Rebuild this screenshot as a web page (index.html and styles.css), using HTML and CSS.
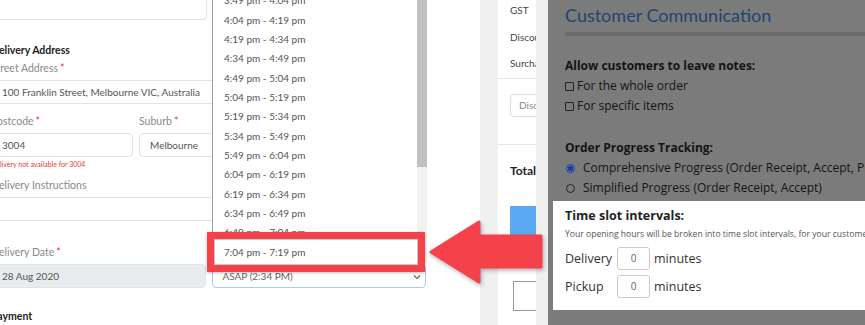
FILE: index.html
```html
<!DOCTYPE html>
<html lang="en">
<head>
  <meta charset="UTF-8">
  <meta name="viewport" content="width=device-width, initial-scale=1.0">
  <title>Time slot intervals</title>
  <link rel="stylesheet" href="styles.css">
</head>
<body>
  <div class="stage">

    <!-- Checkout form -->
    <section class="checkout">
      <div class="checkout-form">
        <div class="notes-box"></div>

        <h4 class="section-title">Delivery Address</h4>
        <label class="field-label">Street Address<span class="req">*</span></label>
        <div class="input">100 Franklin Street, Melbourne VIC, Australia</div>

        <div class="row-thirds">
          <div>
            <label class="field-label">Postcode<span class="req">*</span></label>
            <div class="input">3004</div>
          </div>
          <div>
            <label class="field-label">Suburb<span class="req">*</span></label>
            <div class="input">Melbourne</div>
          </div>
        </div>
        <div class="field-error">Delivery not available for 3004</div>

        <label class="field-label gap-top">Delivery Instructions</label>
        <div class="input"></div>

        <div class="row-halves">
          <div>
            <label class="field-label">Delivery Date<span class="req">*</span></label>
            <div class="input input-disabled">28 Aug 2020</div>
          </div>
          <div class="select-col">
            <div class="input select">
              ASAP (2:34 PM)
              <svg class="chevron" width="8" height="6" viewBox="0 0 8 6"><path d="M1 1.5l3 3 3-3" fill="none" stroke="#666" stroke-width="1.2"/></svg>
            </div>
          </div>
        </div>

        <h4 class="section-title payment">Payment</h4>
      </div>

      <!-- open time slot menu -->
      <ul class="slot-menu">
        <li>3:49 pm - 4:04 pm</li>
        <li>4:04 pm - 4:19 pm</li>
        <li>4:19 pm - 4:34 pm</li>
        <li>4:34 pm - 4:49 pm</li>
        <li>4:49 pm - 5:04 pm</li>
        <li>5:04 pm - 5:19 pm</li>
        <li>5:19 pm - 5:34 pm</li>
        <li>5:34 pm - 5:49 pm</li>
        <li>5:49 pm - 6:04 pm</li>
        <li>6:04 pm - 6:19 pm</li>
        <li>6:19 pm - 6:34 pm</li>
        <li>6:34 pm - 6:49 pm</li>
        <li>6:49 pm - 7:04 pm</li>
        <li>7:04 pm - 7:19 pm</li>
        <div class="menu-scroll"><div class="menu-thumb"></div></div>
      </ul>

      <div class="callout"></div>
    </section>

    <!-- Order summary (cropped) -->
    <aside class="summary">
      <div class="summary-card">
        <div class="sum-row first">GST</div>
        <div class="sum-row">Discount</div>
        <div class="sum-row">Surcharge</div>
        <div class="sum-sep"></div>
        <div class="sum-input">Discount code</div>
        <div class="sum-sep sep-low"></div>
        <div class="sum-total">Total</div>
        <div class="sum-button"></div>
        <div class="sum-outline"></div>
      </div>
    </aside>

    <!-- Settings panel -->
    <section class="settings">
      <h2 class="settings-title">Customer Communication</h2>
      <div class="settings-bar"></div>

      <div class="opt-title">Allow customers to leave notes:</div>
      <div class="check-row"><span class="checkbox"></span>For the whole order</div>
      <div class="check-row"><span class="checkbox"></span>For specific items</div>

      <div class="opt-title spaced">Order Progress Tracking:</div>
      <div class="check-row radio-row"><span class="radio checked"></span>Comprehensive Progress (Order Receipt, Accept, Preparing, Ready)</div>
      <div class="check-row radio-row"><span class="radio"></span>Simplified Progress (Order Receipt, Accept)</div>

      <div class="slot-box">
        <div class="slot-title">Time slot intervals:</div>
        <div class="slot-help">Your opening hours will be broken into time slot intervals, for your customers to choose from.</div>
        <div class="interval-row">
          <span class="interval-label">Delivery</span>
          <span class="interval-input">0</span>
          <span>minutes</span>
        </div>
        <div class="interval-row">
          <span class="interval-label">Pickup</span>
          <span class="interval-input">0</span>
          <span>minutes</span>
        </div>
      </div>
    </section>

    <!-- annotation arrow -->
    <svg class="arrow" width="865" height="325" viewBox="0 0 865 325">
      <polygon points="431,252 479,222 479,236 541,236 541,267 479,267 479,282" fill="#f5424a" stroke="#f5424a" stroke-width="3" stroke-linejoin="round"/>
    </svg>
  </div>
</body>
</html>
```

FILE: styles.css
```css
/* General */
body {
  margin: 0;
  padding: 0;
  font-family: 'Lato', 'Noto Sans', sans-serif;
  background: #fff;
  overflow: hidden;
}

.stage {
  display: flex;
  width: 865px;
  height: 325px;
  position: relative;
  overflow: hidden;
}

/* Checkout form */
.checkout {
  width: 480px;
  flex: none;
  position: relative;
  overflow: hidden;
  background: #fff;
}

.checkout-form {
  width: 435px;
  margin-left: -9px;
}

.notes-box {
  width: 216px;
  height: 50px;
  margin-top: -30px;
  border: 1px solid #dfe3e8;
  border-radius: 4px;
  box-sizing: border-box;
}

.section-title {
  font-size: 10.5px;
  font-weight: 700;
  line-height: 16px;
  color: #222;
  margin: 22px 0 0;
}

.section-title.payment {
  margin-top: 20px;
}

.field-label {
  display: block;
  font-size: 10.5px;
  line-height: 16px;
  color: #8a8a8a;
  margin-top: 2px;
}

.field-label.gap-top {
  margin-top: 7px;
}

.req {
  color: #e53935;
  margin-left: 2px;
}

.input {
  height: 24px;
  margin-top: 4px;
  padding: 0 10px;
  border: 1px solid #dfe3e8;
  border-radius: 4px;
  box-sizing: border-box;
  font-size: 10px;
  line-height: 22px;
  color: #555;
  white-space: nowrap;
  overflow: hidden;
}

.input-disabled {
  background: #e9ecef;
}

.row-thirds {
  display: grid;
  grid-template-columns: 142px 1fr;
  column-gap: 6px;
  margin-top: 7px;
}

.row-halves {
  display: grid;
  grid-template-columns: 1fr 1fr;
  column-gap: 6px;
  margin-top: 21px;
}

.select-col {
  padding-top: 18px;
}

.select {
  position: relative;
  border-color: #a9c9f2;
  color: #666;
}

.chevron {
  position: absolute;
  right: 4px;
  top: 9px;
}

.field-error {
  font-size: 7px;
  line-height: 12px;
  color: #e53935;
  margin-top: 1px;
}

/* Time slot menu */
.slot-menu {
  position: absolute;
  left: 212px;
  top: -8.7px;
  width: 215px;
  margin: 0;
  padding: 0;
  list-style: none;
  background: #fff;
  border-left: 1px solid #a0a0a0;
  box-sizing: border-box;
}

.slot-menu li {
  height: 19.35px;
  line-height: 19.35px;
  padding-left: 11px;
  font-size: 10px;
  color: #555;
}

.menu-scroll {
  position: absolute;
  right: 0;
  top: 0;
  bottom: 0;
  width: 10px;
  background: #f1f1f1;
}

.menu-thumb {
  height: 176px;
  background: #c1c1c1;
}

.callout {
  position: absolute;
  left: 207px;
  top: 232px;
  width: 218px;
  height: 40px;
  border: 7px solid #f5424a;
  box-sizing: border-box;
  box-shadow: inset 0 0 0 1px #c8c8c8, 0 1px 3px rgba(0, 0, 0, 0.25);
}

/* Summary column */
.summary {
  width: 68px;
  flex: none;
  background: #f0f0f0;
  padding: 0 12px 0 18px;
  box-sizing: border-box;
}

.summary-card {
  height: 100%;
  background: #fff;
  padding-left: 12px;
  overflow: hidden;
  white-space: nowrap;
}

.sum-row {
  height: 26.5px;
  line-height: 26.5px;
  font-size: 10px;
  color: #444;
}

.sum-row.first {
  margin-top: -3px;
}

.sum-sep {
  margin: 1.5px 0 0 -12px;
  border-top: 1px solid #e6e6e6;
}

.sum-sep.sep-low {
  margin-top: 27px;
}

.sum-input {
  width: 100px;
  height: 23px;
  margin-top: 15px;
  padding-left: 8px;
  border: 1px solid #dcdcdc;
  border-radius: 4px;
  box-sizing: border-box;
  font-size: 10px;
  line-height: 21px;
  color: #888;
}

.sum-total {
  margin-top: 18px;
  font-size: 12px;
  font-weight: 700;
  line-height: 16px;
  color: #222;
}

.sum-button {
  width: 60px;
  height: 55px;
  margin-top: 27px;
  background: #5aa9f2;
}

.sum-outline {
  width: 60px;
  height: 30px;
  margin: 20px 0 0 3px;
  border: 1px solid #999;
  box-sizing: border-box;
}

/* Settings panel */
.settings {
  flex: 1;
  background: #7b7b7b;
  padding-left: 17px;
  font-family: 'Open Sans', sans-serif;
  color: #141414;
  overflow: hidden;
  white-space: nowrap;
}

.settings-title {
  margin: 3px 0 0;
  font-family: 'Lato', sans-serif;
  font-size: 18px;
  font-weight: 400;
  line-height: 24px;
  color: #1f4570;
}

.settings-bar {
  height: 4px;
  margin-top: 5px;
  background: #6b6b6b;
}

.opt-title {
  margin-top: 20px;
  font-size: 12px;
  font-weight: 700;
  line-height: 20px;
}

.opt-title.spaced {
  margin-top: 22px;
}

.check-row {
  display: flex;
  align-items: center;
  gap: 3px;
  font-size: 12px;
  line-height: 20px;
}

.checkbox {
  flex: none;
  width: 9px;
  height: 9px;
  border: 1px solid #222;
  border-radius: 1px;
  box-sizing: border-box;
}

.radio-row {
  gap: 8px;
}

.radio {
  flex: none;
  width: 9px;
  height: 9px;
  margin-left: 1px;
  border: 1px solid #222;
  border-radius: 50%;
  box-sizing: border-box;
}

.radio.checked {
  border-color: #1b3bb0;
  background: radial-gradient(circle, #1b3bb0 0 2.5px, #7b7b7b 3px);
}

.slot-box {
  height: 109px;
  margin: 3px 0 0 -12px;
  padding: 5px 0 0 12px;
  background: #fff;
  box-sizing: border-box;
  color: #333;
}

.slot-title {
  font-size: 12.5px;
  font-weight: 700;
  line-height: 20px;
  color: #222;
}

.slot-help {
  margin-top: 2px;
  font-size: 8.6px;
  line-height: 13px;
  color: #555;
}

.interval-row {
  display: flex;
  align-items: center;
  height: 23px;
  margin-top: 6px;
  font-size: 12.5px;
}

.interval-row + .interval-row {
  margin-top: 5px;
}

.interval-label {
  width: 52px;
}

.interval-input {
  width: 33px;
  height: 23px;
  margin-right: 4px;
  border: 1px solid #ccc;
  border-radius: 3px;
  box-sizing: border-box;
  font-size: 10px;
  line-height: 21px;
  text-align: center;
  color: #666;
}

/* Annotation */
.arrow {
  position: absolute;
  left: 0;
  top: 0;
  pointer-events: none;
  filter: drop-shadow(1px 2px 2px rgba(0, 0, 0, 0.3));
}
```
